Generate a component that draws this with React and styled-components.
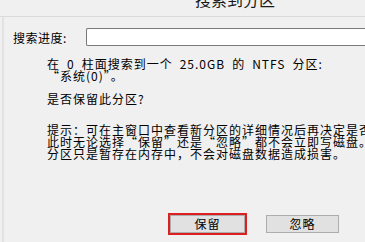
import React from "react";
import styled, { createGlobalStyle } from "styled-components";

const GlobalStyle = createGlobalStyle`
  html, body {
    margin: 0;
    padding: 0;
    background: #f0f0f0;
  }
  body {
    font-family: "Noto Sans CJK SC", "Liberation Sans", sans-serif;
    color: #000;
  }
`;

const Window = styled.div`
  width: 365px;
  height: 242px;
  overflow: hidden;
  background: #f0f0f0;
  display: flex;
  flex-direction: column;
`;

const TitleBar = styled.div`
  height: 16px;
  flex: none;
  overflow: hidden;
  display: flex;
  align-items: flex-end;
  padding-left: 195px;
  border-bottom: 1px solid #dadada;
`;

const Title = styled.div`
  flex: none;
  font-size: 16px;
  line-height: 24px;
  height: 24px;
  color: #1a1a1a;
  margin-bottom: 5px;
`;

const Body = styled.div`
  flex: 1;
  margin-left: 2px;
  border-left: 2px solid #e2e2e2;
  padding: 11px 0 0 9px;
  font-size: 12px;
  letter-spacing: 1px;
`;

const ProgressRow = styled.div`
  display: flex;
  align-items: center;
  height: 18px;
`;

const Label = styled.span`
  width: 73px;
  flex: none;
  line-height: 13px;
  letter-spacing: 0.5px;
`;

const ProgressBox = styled.div`
  flex: 1;
  height: 16px;
  border: 1px solid #7a7a7a;
  border-right: none;
  border-radius: 2px 0 0 2px;
  background: #ffffff;
`;

const Message = styled.div`
  padding-left: 34px;
  margin-top: ${(p) => p.$gap}px;
  line-height: 12.3px;
  white-space: pre;
`;

const ButtonRow = styled.div`
  display: flex;
  gap: 21px;
  padding-left: 157px;
  margin-top: 54px;
`;

const Button = styled.button`
  width: ${(p) => p.$width}px;
  height: 18px;
  padding: 0;
  border: 1px solid #adadad;
  background: #e1e1e1;
  font-family: "Noto Sans CJK SC", "Liberation Sans", sans-serif;
  font-size: 12px;
  letter-spacing: 1px;
  line-height: 16px;
  color: #000;
  outline: ${(p) => (p.$focused ? "2px solid #dc1f1f" : "none")};
  outline-offset: 0;
`;

export default function App() {
  return (
    <>
      <GlobalStyle />
      <Window lang="zh-CN">
        <TitleBar>
          <Title>搜索到分区</Title>
        </TitleBar>
        <Body>
          <ProgressRow>
            <Label>搜索进度:</Label>
            <ProgressBox />
          </ProgressRow>
          <Message $gap={12}>
            {"在\u20020\u2002柱面搜索到一个\u200225.0GB\u2002的\u2002NTFS\u2002分区:"}
            <br />
            “系统(0)”。
          </Message>
          <Message $gap={10}>是否保留此分区?</Message>
          <Message $gap={19}>
            提示：可在主窗口中查看新分区的详细情况后再决定是否保留。
            <br />
            此时无论选择“保留”还是“忽略”都不会立即写磁盘。
            <br />
            分区只是暂存在内存中，不会对磁盘数据造成损害。
          </Message>
          <ButtonRow>
            <Button $width={75} $focused>保留</Button>
            <Button $width={73}>忽略</Button>
          </ButtonRow>
        </Body>
      </Window>
    </>
  );
}
